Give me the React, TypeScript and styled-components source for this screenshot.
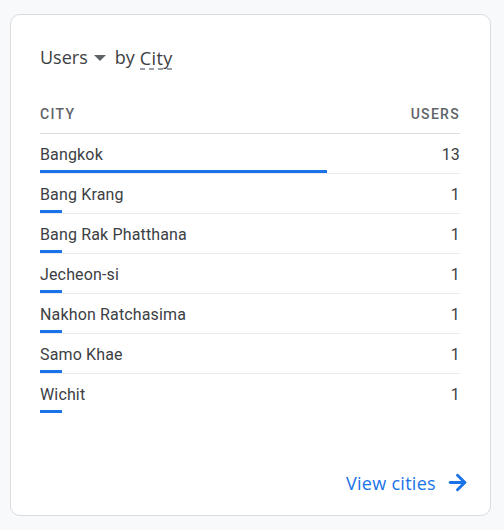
import styled, { createGlobalStyle } from "styled-components";
import { ArrowRight } from "lucide-react";

const GlobalStyle = createGlobalStyle`
    html, body {
        margin: 0;
        padding: 0;
        background: #f8f9fa;
        font-family: Roboto, "Liberation Sans", sans-serif;
    }
`;

const rows = [
    { city: "Bangkok", users: 13 },
    { city: "Bang Krang", users: 1 },
    { city: "Bang Rak Phatthana", users: 1 },
    { city: "Jecheon-si", users: 1 },
    { city: "Nakhon Ratchasima", users: 1 },
    { city: "Samo Khae", users: 1 },
    { city: "Wichit", users: 1 },
];

const max = Math.max(...rows.map((r) => r.users));

function App() {
    return (
        <Page>
            <GlobalStyle />
            <Card>
                <Title>
                    <Metric>
                        Users
                        <Caret />
                    </Metric>
                    <span>by</span>
                    <Dimension>City</Dimension>
                </Title>

                <Table>
                    <HeadRow>
                        <span>City</span>
                        <span>Users</span>
                    </HeadRow>
                    {rows.map((r) => (
                        <Row key={r.city}>
                            <Cells>
                                <span>{r.city}</span>
                                <span>{r.users}</span>
                            </Cells>
                            <Track>
                                <Bar style={{ width: `${(r.users / max) * 68.4}%` }} />
                            </Track>
                        </Row>
                    ))}
                </Table>

                <Footer>
                    <ViewLink href="#">
                        View cities
                        <ArrowRight size={25} strokeWidth={2.8} />
                    </ViewLink>
                </Footer>
            </Card>
        </Page>
    );
}

export default App;

const Page = styled.div`
    width: 504px;
    height: 530px;
    padding: 14px 0 0 10px;
    box-sizing: border-box;
`;

const Card = styled.div`
    width: 481px;
    height: 502px;
    box-sizing: border-box;
    background: #ffffff;
    border: 1px solid #dadce0;
    border-radius: 10px;
    padding: 29px 30px 20px 29px;
    display: flex;
    flex-direction: column;
`;

const Title = styled.div`
    display: flex;
    align-items: center;
    gap: 5px;
    height: 26px;
    font-family: "Open Sans", Roboto, sans-serif;
    font-size: 18px;
    color: #3c4043;
`;

const Metric = styled.span`
    display: flex;
    align-items: center;
    gap: 6px;
    margin-right: 4px;
`;

const Caret = styled.span`
    width: 0;
    height: 0;
    border-left: 6px solid transparent;
    border-right: 6px solid transparent;
    border-top: 6px solid #5f6368;
    margin-top: 1px;
`;

const Dimension = styled.span`
    line-height: 22px;
    margin-top: 2px;
    padding-bottom: 1px;
    letter-spacing: 0.4px;
    background-image: linear-gradient(to right, #9aa0a6 55%, transparent 55%);
    background-size: 9px 2px;
    background-repeat: repeat-x;
    background-position: 0 100%;
`;

const Table = styled.div`
    margin-top: 24px;
    display: flex;
    flex-direction: column;
`;

const HeadRow = styled.div`
    display: flex;
    justify-content: space-between;
    align-items: center;
    height: 39px;
    border-bottom: 1px solid #dadce0;
    font-size: 14px;
    font-weight: 500;
    letter-spacing: 1.3px;
    text-transform: uppercase;
    color: #5f6368;
`;

const Row = styled.div`
    display: flex;
    flex-direction: column;
    border-bottom: 1px solid #e8eaed;
    &:last-child {
        border-bottom-color: transparent;
    }
`;

const Cells = styled.div`
    display: flex;
    justify-content: space-between;
    align-items: center;
    height: 20px;
    margin-top: 10px;
    font-size: 16px;
    letter-spacing: 0.15px;
    color: #3c4043;
`;

const Track = styled.div`
    height: 3px;
    margin-top: 6px;
`;

const Bar = styled.div`
    height: 3px;
    background: #1a73e8;
`;

const Footer = styled.div`
    margin-top: auto;
    display: flex;
    justify-content: flex-end;
`;

const ViewLink = styled.a`
    display: flex;
    align-items: center;
    gap: 9px;
    color: #1a73e8;
    font-family: "Open Sans", Roboto, sans-serif;
    font-size: 18px;
    letter-spacing: 0.3px;
    text-decoration: none;
    margin-right: -10px;
`;
